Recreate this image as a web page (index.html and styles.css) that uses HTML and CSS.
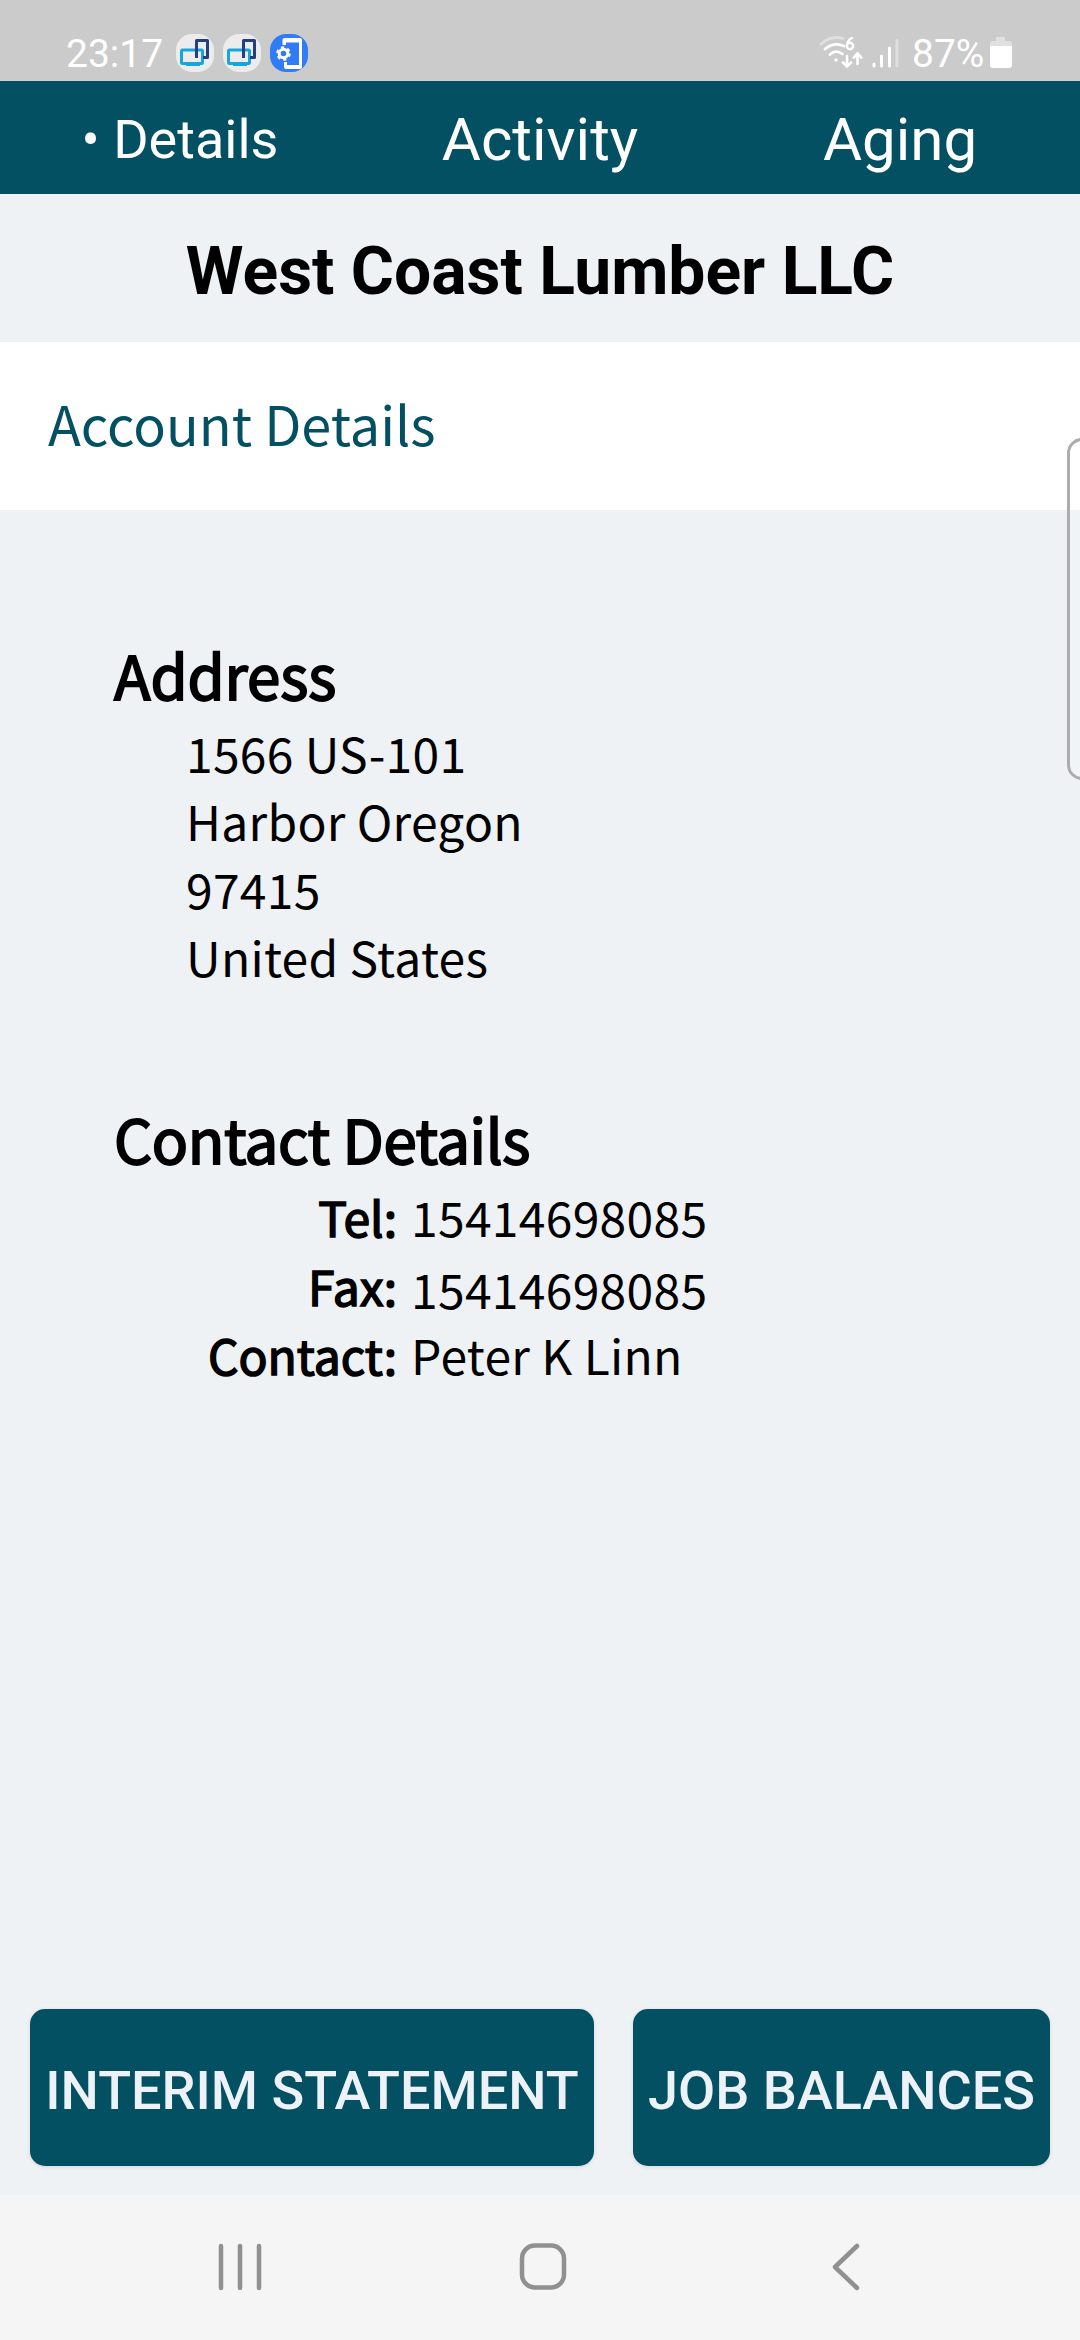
FILE: index.html
```html
<!DOCTYPE html>
<html lang="en">
<head>
<meta charset="utf-8">
<title>West Coast Lumber LLC</title>
<link rel="stylesheet" href="styles.css">
</head>
<body>
<div class="screen">
  <header class="status">
    <div class="status-left">
      <span class="clock">23:17</span>
      <svg class="app-icon" viewBox="0 0 38 38"><rect width="38" height="38" rx="16" fill="#ececec"/><path d="M10 29h14v3H10z" fill="#16a5dc"/><rect x="5.500" y="16" width="21" height="13.500" rx="1" fill="none" stroke="#16a5dc" stroke-width="3"/><path d="M20.500 24V6.500h11v17H27" fill="none" stroke="#233f80" stroke-width="3" stroke-linejoin="round"/></svg>
      <svg class="app-icon" viewBox="0 0 38 38"><rect width="38" height="38" rx="16" fill="#ececec"/><path d="M10 29h14v3H10z" fill="#16a5dc"/><rect x="5.500" y="16" width="21" height="13.500" rx="1" fill="none" stroke="#16a5dc" stroke-width="3"/><path d="M20.500 24V6.500h11v17H27" fill="none" stroke="#233f80" stroke-width="3" stroke-linejoin="round"/></svg>
      <svg class="app-icon" viewBox="0 0 38 38"><rect width="38" height="38" rx="16" fill="#2f7cf6"/><path d="M12.500 11V6a2 2 0 0 1 2-2H30a2 2 0 0 1 2 2v27a2 2 0 0 1-2 2H16a2 2 0 0 1-2-2v-5h3v3h12V8.500H16V11z" fill="#fff"/><circle cx="13.500" cy="19.500" r="4.300" fill="none" stroke="#fff" stroke-width="3"/><circle cx="13.500" cy="19.500" r="6" fill="none" stroke="#fff" stroke-width="2.600" stroke-dasharray="3.140 3.140"/></svg>
    </div>
    <div class="status-right">
      <svg class="wifi" viewBox="0 0 44 34" fill="none" stroke="#fff" stroke-linecap="round" stroke-width="2.800"><path d="M2 8Q12-1 24 2.500" opacity=".4"/><path d="M6 13Q15 5.500 25 10M11 18.500Q17 13 23.500 18"/><circle cx="17" cy="24" r="1" fill="#fff" stroke-width="1.500"/><circle cx="31" cy="10" r="3.200" stroke-width="2.400"/><path d="M28 9Q28.500 4 33 2" stroke-width="2.400"/><path d="M28 20v10M24 26.500l4 4 4-4M38.500 28V18M34.800 21.500l3.700-4 3.700 4" stroke-width="2.600"/></svg>
      <svg class="signal" viewBox="0 0 28 32" fill="none" stroke="#fff" stroke-linecap="round" stroke-width="3"><path d="M2 27v2M9.500 19v10M17.500 11v18"/><path d="M25 3.500V29" opacity=".4"/></svg>
      <span class="percent">87%</span>
      <svg class="battery" viewBox="0 0 22 32"><path d="M6 0h9v4h5a2 2 0 0 1 2 2v4H0V6a2 2 0 0 1 2-2h4z" fill="#fff" opacity=".4"/><path d="M0 9h22v19a3 3 0 0 1-3 3H3a3 3 0 0 1-3-3z" fill="#fff"/></svg>
    </div>
  </header>
  <nav class="tabs">
    <a class="tab tab-active">• Details</a>
    <a class="tab">Activity</a>
    <a class="tab">Aging</a>
  </nav>
  <h1 class="company">West Coast Lumber LLC</h1>
  <div class="section-bar">Account Details</div>
  <main class="content">
    <section class="block">
      <h2 class="heading">Address</h2>
      <div class="address">
        <div>1566 US-101</div>
        <div>Harbor Oregon</div>
        <div>97415</div>
        <div>United States</div>
      </div>
    </section>
    <section class="block">
      <h2 class="heading heading-tight">Contact Details</h2>
      <dl class="contact">
        <dt>Tel:</dt><dd>15414698085</dd>
        <dt>Fax:</dt><dd class="fax">15414698085</dd>
        <dt>Contact:</dt><dd>Peter K Linn</dd>
      </dl>
    </section>
  </main>
  <footer class="actions">
    <button class="action">INTERIM STATEMENT</button>
    <button class="action">JOB BALANCES</button>
  </footer>
  <nav class="system-nav">
    <svg class="recents" viewBox="0 0 48 52"><path d="M5 5v42M24 5v42M43 5v42"/></svg>
    <svg class="home" viewBox="0 0 48 52"><rect x="3" y="4.500" width="42" height="42" rx="13"/></svg>
    <svg class="back" viewBox="0 0 30 52"><path d="M26 5L4 26l22 21"/></svg>
  </nav>
  <div class="edge-handle"></div>
</div>
</body>
</html>
```
FILE: styles.css
```css
* { box-sizing: border-box; }
body { margin: 0; }
.screen {
  position: relative;
  display: flex;
  flex-direction: column;
  width: 1080px;
  height: 2340px;
  overflow: hidden;
  background: #eef2f5;
  color: #000;
  font-family: Roboto, sans-serif;
}
.status {
  display: flex;
  justify-content: space-between;
  height: 81px;
  padding: 26px 68px 0 66px;
  background: #cbcbcb;
  color: #fff;
  font-size: 39px;
  line-height: 54px;
}
.status-left, .status-right { display: flex; align-items: center; height: 54px; }
.clock { width: 110px; padding-top: 1px; }
.app-icon { width: 38px; height: 38px; margin-right: 9px; }
.wifi { width: 44px; height: 34px; }
.signal { width: 28px; height: 32px; margin-left: 9px; }
.percent { width: 78px; margin-left: 12px; padding-top: 1px; }
.battery { width: 22px; height: 32px; }
.tabs {
  display: grid;
  grid-template-columns: repeat(3, 1fr);
  height: 113px;
  padding-top: 5px;
  background: #035063;
  color: #fff;
}
.tab { font-size: 60px; line-height: 108px; text-align: center; }
.tab-active { font-size: 54px; }
.company {
  height: 148px;
  margin: 0;
  padding-top: 7px;
  font-size: 66px;
  font-weight: 700;
  line-height: 141px;
  text-align: center;
}
.section-bar {
  height: 168px;
  padding-left: 48px;
  background: #fff;
  color: #035063;
  font: 54px/162px "Noto Sans CJK SC", sans-serif;
}
.content {
  flex: 1;
  padding: 128px 114px 0;
  font: 48px/68px "Noto Sans CJK SC", sans-serif;
}
.block { margin-bottom: 112px; }
.heading {
  margin: 0 0 8px;
  font-size: 60px;
  font-weight: 400;
  line-height: 72px;
  letter-spacing: -.1px;
  -webkit-text-stroke: 1.9px #000;
}
.heading-tight { letter-spacing: -.45px; }
.address { padding-left: 72px; letter-spacing: .28px; }
.contact {
  display: grid;
  grid-template-columns: 283px auto;
  column-gap: 14px;
  margin: 0;
  line-height: 69px;
}
.contact dt { text-align: right; -webkit-text-stroke: 1.5px #000; }
.contact dd { margin: 0; letter-spacing: .3px; }
.contact .fax { margin: 3px 0 -3px; }
.actions {
  display: grid;
  grid-template-columns: 564px 417px;
  column-gap: 39px;
  height: 186px;
  padding: 0 30px 29px;
}
.action {
  padding: 7px 0 0;
  border: 0;
  border-radius: 15px;
  background: #035063;
  box-shadow: 0 1px 4px rgba(0, 0, 0, .1);
  color: #edf2f8;
  font: 500 54px/1 Roboto, sans-serif;
  white-space: nowrap;
}
.system-nav {
  display: grid;
  grid-template-columns: repeat(3, 1fr);
  align-items: center;
  justify-items: center;
  height: 145px;
  padding: 0 83px 1px 89px;
  background: #f5f5f5;
}
.system-nav svg { height: 52px; fill: none; stroke: #909090; stroke-width: 4.5; stroke-linecap: round; stroke-linejoin: round; }
.recents, .home { width: 48px; }
.back { width: 30px; }
.edge-handle {
  position: absolute;
  top: 438px;
  right: -30px;
  width: 43px;
  height: 342px;
  border: 3px solid #acacac;
  border-radius: 15px;
  background: rgba(255, 255, 255, .15);
}
```
